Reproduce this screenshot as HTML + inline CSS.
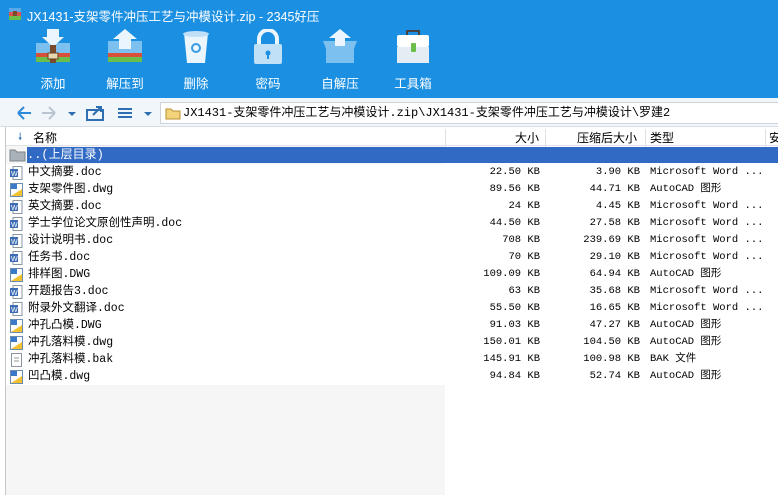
<!DOCTYPE html>
<html><head><meta charset="utf-8"><style>
*{margin:0;padding:0;box-sizing:border-box}
body{width:778px;height:495px;overflow:hidden;background:#fff;font-family:"Liberation Sans","Noto Sans CJK SC",sans-serif;position:relative}
#top{position:absolute;left:0;top:0;width:778px;height:98px;background:#1b8fe2}
.title{position:absolute;left:27px;top:6px;color:#fff;font-size:12.5px}
.tb{position:absolute;top:29px;width:60px;text-align:center;color:#fff;font-size:12.5px}
.tb svg{display:block;margin:0 auto 8px}
#addr{position:absolute;left:0;top:98px;width:778px;height:29px;background:#f1f6fb;border-bottom:1px solid #d8dde3}
#path{position:absolute;left:160px;top:102px;width:620px;height:22px;background:#fff;border:1px solid #ccd3da;font-family:"Liberation Mono","Noto Sans CJK SC",monospace;font-size:12px;line-height:20px;padding-left:22px;white-space:nowrap;overflow:hidden}
#hdr{position:absolute;left:6px;top:127px;width:772px;height:19px;background:#fff;border-bottom:1px solid #e3e3e3;font-size:12px}
#hdr div{position:absolute;top:2px}
.sep{position:absolute;top:0;width:1px;height:19px;background:#e0e0e0}
#leftcol{position:absolute;left:6px;top:146px;width:439px;height:349px;background:#f6f6f6}
#lborder{position:absolute;left:5px;top:127px;width:1px;height:368px;background:#c8c8c8}
#sel{position:absolute;left:27px;top:147px;width:751px;height:16px;background:#316ac5;color:#fff;font-size:12px;line-height:16px;font-family:"Liberation Mono","Noto Sans CJK SC",monospace}
.row{position:absolute;left:6px;width:772px;height:17px;font-family:"Liberation Mono","Noto Sans CJK SC",monospace;font-size:10.5px;line-height:17px;background:#fff}
.row .n{position:absolute;left:22px;font-size:11.5px}
.row .s{position:absolute;right:238px;width:100px;text-align:right}
.row .c{position:absolute;right:138px;width:100px;text-align:right}
.row .t{position:absolute;left:644px;white-space:nowrap}
.ic{position:absolute;left:4px;top:2px;width:13px;height:14px}
</style></head><body>
<div id="top">
<svg style="position:absolute;left:8px;top:7px" width="14" height="14"><rect x="1" y="1" width="12" height="4" fill="#5aa8e8"/><rect x="1" y="5" width="12" height="4" fill="#d9534f"/><rect x="1" y="9" width="12" height="4" fill="#6abf4b"/><rect x="5" y="4" width="4" height="5" fill="#7a4a2a"/></svg>
<div class="title">JX1431-支架零件冲压工艺与冲模设计.zip - 2345好压</div>
<div class="tb" style="left:23px"><svg width="40" height="36"><polygon points="3,14 37,14 37,24 3,24" fill="#7cc0f0"/><rect x="3" y="24" width="34" height="4" fill="#d9503a"/><rect x="3" y="28" width="34" height="5" fill="#6abf4b"/><polygon points="14,0 26,0 26,8 31,8 20,18 9,8 14,8" fill="#eaf5fd"/><rect x="17" y="16" width="6" height="18" fill="#7a4a2a"/><rect x="15" y="24" width="10" height="6" fill="#e6d6b0" stroke="#6b3f22"/></svg>添加</div>
<div class="tb" style="left:95px"><svg width="40" height="36"><polygon points="3,12 37,12 37,24 3,24" fill="#7cc0f0"/><rect x="3" y="24" width="34" height="4" fill="#d9503a"/><rect x="3" y="28" width="34" height="5" fill="#6abf4b"/><polygon points="20,0 32,10 26,10 26,20 14,20 14,10 8,10" fill="#eaf5fd"/></svg>解压到</div>
<div class="tb" style="left:166px"><svg width="40" height="36"><path d="M8 4 L32 4 L29 34 L11 34 Z" fill="#eaf5fd"/><ellipse cx="20" cy="5" rx="13" ry="3" fill="#bfe0f7"/><circle cx="20" cy="19" r="4" fill="none" stroke="#3b9be0" stroke-width="2"/></svg>删除</div>
<div class="tb" style="left:238px"><svg width="40" height="36"><path d="M11 16 V10 A9 9 0 0 1 29 10 V16" fill="none" stroke="#eaf5fd" stroke-width="4"/><rect x="6" y="15" width="28" height="20" rx="2" fill="#bfe0f7"/><circle cx="20" cy="24" r="2.5" fill="#1b8fe2"/><rect x="19" y="25" width="2" height="5" fill="#1b8fe2"/></svg>密码</div>
<div class="tb" style="left:310px"><svg width="40" height="36"><polygon points="3,12 37,12 34,20 34,34 6,34 6,20" fill="#7cc0f0"/><polygon points="20,0 31,9 25,9 25,17 15,17 15,9 9,9" fill="#eaf5fd"/></svg>自解压</div>
<div class="tb" style="left:383px"><svg width="40" height="36"><path d="M14 6 V2 H26 V6" fill="none" stroke="#444" stroke-width="2"/><rect x="4" y="6" width="32" height="12" rx="2" fill="#fff"/><rect x="4" y="18" width="32" height="16" fill="#e4edf3"/><rect x="18" y="14" width="5" height="9" rx="1" fill="#6abf4b"/></svg>工具箱</div>
</div>
<div id="addr">
<svg style="position:absolute;left:14px;top:6px" width="140" height="18"><path d="M4 9 H17 M4 9 L10 3 M4 9 L10 15" stroke="#2d8ad8" stroke-width="2" fill="none"/><path d="M28 9 H41 M41 9 L35 3 M41 9 L35 15" stroke="#b8c4cf" stroke-width="2" fill="none"/><polygon points="54,8 62,8 58,12" fill="#2d6fb0"/><rect x="73" y="6" width="16" height="10" fill="none" stroke="#2d6fb0" stroke-width="2"/><path d="M79 11 L86 4 M82 3 H87 V8" stroke="#2d6fb0" stroke-width="2" fill="none"/><path d="M104 5 H118 M104 9 H118 M104 13 H118" stroke="#2d6fb0" stroke-width="2"/><polygon points="130,8 138,8 134,12" fill="#2d6fb0"/></svg>
</div>
<div id="path"><svg style="position:absolute;left:4px;top:4px" width="16" height="13"><path d="M1 2 H6 L8 4 H15 V12 H1 Z" fill="#f3d37a" stroke="#b8902e"/></svg>JX1431-支架零件冲压工艺与冲模设计.zip\JX1431-支架零件冲压工艺与冲模设计\罗建2</div>
<div id="leftcol"></div>
<div id="lborder"></div>
<div id="hdr">
<div style="left:12px;color:#2d6fb0;font-size:10px;top:3px">🠗</div>
<div style="left:27px">名称</div>
<div class="sep" style="left:439px"></div>
<div style="left:509px">大小</div>
<div class="sep" style="left:539px"></div>
<div style="left:571px">压缩后大小</div>
<div class="sep" style="left:639px"></div>
<div style="left:644px">类型</div>
<div class="sep" style="left:759px"></div>
<div style="left:763px">安</div>
</div>
<svg style="position:absolute;left:9px;top:148px" width="17" height="14"><path d="M1 2 H6 L8 4 H16 V13 H1 Z" fill="#a9b1b9" stroke="#7d858c"/></svg>
<div id="sel">..(上层目录)</div>
<div id="rows"></div>
<script>
var d=[["中文摘要.doc","22.50 KB","3.90 KB","Microsoft Word ...","w"],["支架零件图.dwg","89.56 KB","44.71 KB","AutoCAD 图形","c"],["英文摘要.doc","24 KB","4.45 KB","Microsoft Word ...","w"],["学士学位论文原创性声明.doc","44.50 KB","27.58 KB","Microsoft Word ...","w"],["设计说明书.doc","708 KB","239.69 KB","Microsoft Word ...","w"],["任务书.doc","70 KB","29.10 KB","Microsoft Word ...","w"],["排样图.DWG","109.09 KB","64.94 KB","AutoCAD 图形","c"],["开题报告3.doc","63 KB","35.68 KB","Microsoft Word ...","w"],["附录外文翻译.doc","55.50 KB","16.65 KB","Microsoft Word ...","w"],["冲孔凸模.DWG","91.03 KB","47.27 KB","AutoCAD 图形","c"],["冲孔落料模.dwg","150.01 KB","104.50 KB","AutoCAD 图形","c"],["冲孔落料模.bak","145.91 KB","100.98 KB","BAK 文件","b"],["凹凸模.dwg","94.84 KB","52.74 KB","AutoCAD 图形","c"]];
var h="";
d.forEach(function(r,i){
var ic=r[4]=="w"?'<svg class="ic"><rect x="3" y="0.5" width="9" height="13" fill="#fff" stroke="#8a96a3"/><rect x="0" y="3" width="8" height="8" fill="#3c6db4"/><text x="1" y="10" font-size="7" fill="#fff" font-family="Liberation Sans">W</text></svg>':r[4]=="c"?'<svg class="ic"><rect x="0.5" y="0.5" width="12" height="13" fill="#fff" stroke="#6b8bb0"/><polygon points="1,13 12,6 12,13" fill="#f2c230"/><rect x="1" y="1" width="6" height="5" fill="#3a78c8"/></svg>':'<svg class="ic"><rect x="1.5" y="0.5" width="10" height="13" fill="#fff" stroke="#8a96a3"/><path d="M4 5 H9 M4 8 H9" stroke="#999"/></svg>';
h+='<div class="row" style="top:'+(164+i*17)+'px">'+ic+'<span class="n">'+r[0]+'</span><span class="s">'+r[1]+'</span><span class="c">'+r[2]+'</span><span class="t">'+r[3]+'</span></div>';});
document.getElementById("rows").innerHTML=h;
</script>
</body></html>
